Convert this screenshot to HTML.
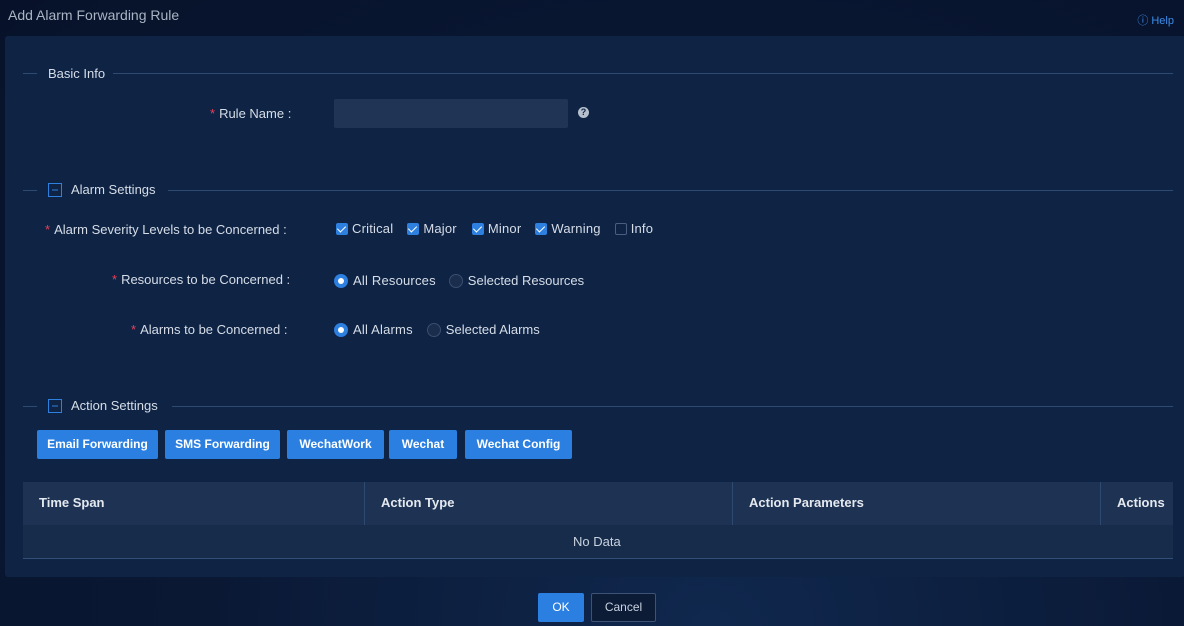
<!DOCTYPE html>
<html><head><style>
*{box-sizing:border-box;margin:0;padding:0}
body{width:1184px;height:626px;overflow:hidden;background:radial-gradient(ellipse at 60% 100%,#10284e 0%,#0a1834 50%,#07122a 100%);font-family:"Liberation Sans",sans-serif;color:#c9d3e0;font-size:13px;position:relative}
.abs{position:absolute}
.title{left:8px;top:7px;font-size:14px;color:#a9b4c4}
.help{right:10px;top:12px;font-size:11px;color:#3d8ce8}
.panel{left:5px;top:36px;width:1180px;height:541px;background:#0f2444;border-radius:3px}
.line{height:1px;background:#2f4a70}
.lbl{color:#d6dde8;font-size:13px;white-space:nowrap}
.req{color:#e8415a;margin-right:4px}
.cb{display:inline-block;width:12px;height:12px;background:#2d7fe0;border-radius:2px;vertical-align:-2px;margin-right:4px;position:relative}
.cb:after{content:"";position:absolute;left:3px;top:1px;width:4px;height:7px;border:solid #fff;border-width:0 1.5px 1.5px 0;transform:rotate(45deg)}
.cb.off{background:transparent;border:1px solid #4a5f80}
.cb.off:after{display:none}
.opt{margin-right:12px;letter-spacing:0.2px}
.rd{display:inline-block;width:14px;height:14px;border-radius:50%;background:#2d7fe0;vertical-align:-3px;margin-right:5px;position:relative}
.rd:after{content:"";position:absolute;left:4px;top:4px;width:6px;height:6px;border-radius:50%;background:#fff}
.rd.off{background:#1a2d4c;border:1px solid #3a4f70}
.rd.off:after{display:none}
.btn{top:430px;height:29px;background:#2a7fe0;color:#fff;font-size:12px;font-weight:bold;border-radius:2px;text-align:center;line-height:29px}
</style></head><body>
<div class="abs title">Add Alarm Forwarding Rule</div>
<div class="abs help">ⓘ Help</div>
<div class="abs panel"></div>
<div class="abs line" style="left:23px;top:73px;width:14px"></div>
<div class="abs lbl" style="left:48px;top:66px">Basic Info</div>
<div class="abs line" style="left:113px;top:73px;width:1060px"></div>
<div class="abs lbl" style="left:210px;top:106px"><span class="req">*</span>Rule Name :</div>
<div class="abs" style="left:334px;top:99px;width:234px;height:29px;background:#203556;border-radius:2px"></div>
<div class="abs" style="left:578px;top:107px;width:11px;height:11px;border-radius:50%;background:#b6c0ce;color:#0f2546;font-size:9px;font-weight:bold;text-align:center;line-height:11px">?</div>

<div class="abs line" style="left:23px;top:190px;width:14px"></div>
<svg class="abs" style="left:48px;top:183px" width="14" height="14"><rect x="0.5" y="0.5" width="13" height="13" fill="none" stroke="#2d7fe0"/><line x1="4" y1="7" x2="10" y2="7" stroke="#2d7fe0"/></svg>
<div class="abs lbl" style="left:71px;top:182px">Alarm Settings</div>
<div class="abs line" style="left:168px;top:190px;width:1005px"></div>
<div class="abs lbl" style="left:45px;top:222px"><span class="req">*</span>Alarm Severity Levels to be Concerned :</div>
<div class="abs lbl" style="left:336px;top:221px"><span class="opt" style="margin-right:14px"><span class="cb"></span>Critical</span><span class="opt" style="margin-right:15px"><span class="cb"></span>Major</span><span class="opt" style="margin-right:14px"><span class="cb"></span>Minor</span><span class="opt" style="margin-right:14px"><span class="cb"></span>Warning</span><span class="opt"><span class="cb off"></span>Info</span></div>
<div class="abs lbl" style="left:112px;top:272px"><span class="req">*</span>Resources to be Concerned :</div>
<div class="abs lbl" style="left:334px;top:273px"><span class="opt" style="margin-right:13px"><span class="rd"></span>All Resources</span><span><span class="rd off"></span>Selected Resources</span></div>
<div class="abs lbl" style="left:131px;top:322px"><span class="req">*</span>Alarms to be Concerned :</div>
<div class="abs lbl" style="left:334px;top:322px"><span class="opt" style="margin-right:14px"><span class="rd"></span>All Alarms</span><span><span class="rd off"></span>Selected Alarms</span></div>

<div class="abs line" style="left:23px;top:406px;width:14px"></div>
<svg class="abs" style="left:48px;top:399px" width="14" height="14"><rect x="0.5" y="0.5" width="13" height="13" fill="none" stroke="#2d7fe0"/><line x1="4" y1="7" x2="10" y2="7" stroke="#2d7fe0"/></svg>
<div class="abs lbl" style="left:71px;top:398px">Action Settings</div>
<div class="abs line" style="left:172px;top:406px;width:1001px"></div>
<div class="abs btn" style="left:37px;width:121px">Email Forwarding</div>
<div class="abs btn" style="left:165px;width:115px">SMS Forwarding</div>
<div class="abs btn" style="left:287px;width:97px">WechatWork</div>
<div class="abs btn" style="left:389px;width:68px">Wechat</div>
<div class="abs btn" style="left:465px;width:107px">Wechat Config</div>
<div class="abs" style="left:23px;top:482px;width:1150px;height:43px;background:#1e3353"></div>
<div class="abs" style="left:364px;top:482px;width:1px;height:43px;background:#2f4a70"></div>
<div class="abs" style="left:732px;top:482px;width:1px;height:43px;background:#2f4a70"></div>
<div class="abs" style="left:1100px;top:482px;width:1px;height:43px;background:#2f4a70"></div>
<div class="abs" style="left:39px;top:495px;font-weight:bold;color:#e4e9f0">Time Span</div>
<div class="abs" style="left:381px;top:495px;font-weight:bold;color:#e4e9f0">Action Type</div>
<div class="abs" style="left:749px;top:495px;font-weight:bold;color:#e4e9f0">Action Parameters</div>
<div class="abs" style="left:1117px;top:495px;font-weight:bold;color:#e4e9f0">Actions</div>
<div class="abs" style="left:23px;top:525px;width:1150px;height:34px;background:#172b4a;border-bottom:1px solid #34507a"></div>
<div class="abs" style="left:573px;top:534px;color:#c9d3e0">No Data</div>
<div class="abs" style="left:538px;top:593px;width:46px;height:29px;background:#2a7fe0;color:#fff;text-align:center;line-height:29px;border-radius:2px;font-size:12px">OK</div>
<div class="abs" style="left:591px;top:593px;width:65px;height:29px;border:1px solid #3c5276;color:#c9d3e0;text-align:center;line-height:27px;border-radius:2px;font-size:12px;background:#0c1b36">Cancel</div>
</body></html>
